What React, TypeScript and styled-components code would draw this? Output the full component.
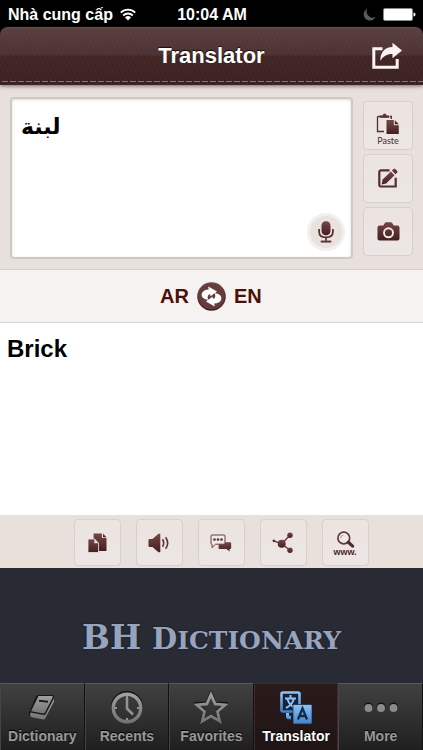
import React, { useState } from "react";
import styled, { createGlobalStyle, css } from "styled-components";

const Global = createGlobalStyle`
  *, *::before, *::after { box-sizing: border-box; }
  body { margin: 0; background: #282b34; font-family: "Liberation Sans", Arial, sans-serif; }
  button { font: inherit; color: inherit; border: 0; padding: 0; background: none; cursor: pointer; }
  svg { display: block; }
`;

const Screen = styled.div`
  min-height: 100vh;
  display: flex;
  flex-direction: column;
  background: #000;
`;

const StatusBar = styled.div`
  height: 27px;
  padding: 2px 7px 0 8px;
  display: grid;
  grid-template-columns: 1fr auto 1fr;
  align-items: center;
  color: #fff;
  font-size: 16px;
  font-weight: 700;
  line-height: 24px;
  white-space: nowrap;
`;

const StatusGroup = styled.div<{ $end?: boolean }>`
  display: flex;
  align-items: center;
  gap: 7px;
  justify-content: ${(p) => (p.$end ? "flex-end" : "flex-start")};
`;

const Header = styled.header`
  height: 58px;
  flex: none;
  display: flex;
  flex-direction: column;
  border-radius: 8px 8px 0 0;
  color: #fff;
  background:
    repeating-linear-gradient(65deg, rgba(255, 255, 255, 0.025) 0 1px, transparent 1px 4px),
    linear-gradient(#5a4040 0, #4c3232 28px, #422626 29px, #3b2121 100%);
  box-shadow: inset 0 1px 0 #6a5050, 0 1px 4px rgba(40, 20, 20, 0.6);
  position: relative;
  z-index: 1;
`;

const HeaderRow = styled.div`
  flex: 1;
  display: grid;
  grid-template-columns: 1fr auto 1fr;
  align-items: center;
  padding: 3px 20px 0;
`;

const Title = styled.h1`
  grid-column: 2;
  margin: 0;
  font-size: 22px;
  line-height: 28px;
  text-shadow: 0 -1px 1px #1c0c0c;
`;

const ShareButton = styled.button`
  justify-self: end;
`;

const Stitch = styled.div`
  height: 1px;
  margin-bottom: 3px;
  background: repeating-linear-gradient(90deg, transparent 0 2px, #857272 2px 8px);
`;

const InputPanel = styled.section`
  display: grid;
  grid-template-columns: 1fr 50px;
  gap: 10px;
  padding: 12px 10px 10px;
  background: #e8e0dc;
  border-bottom: 1px solid #d6d1ce;
`;

const InputBox = styled.div`
  position: relative;
  display: flex;
`;

const SourceText = styled.textarea`
  flex: 1;
  min-width: 0;
  resize: none;
  padding: 13px 9px;
  border: 2px solid #cfc8c5;
  border-radius: 4px;
  background: #fff;
  color: #000;
  font-family: "DejaVu Sans", sans-serif;
  font-size: 22px;
  font-weight: 700;
  line-height: 30px;
  box-shadow: inset 0 1px 3px rgba(0, 0, 0, 0.15);
  outline: none;
`;

const MicButton = styled.button`
  position: absolute;
  right: 8px;
  bottom: 8px;
  width: 38px;
  height: 38px;
  border-radius: 50%;
  background: #e9e2de;
  border: 3px solid #f3efec;
  display: grid;
  place-items: center;
`;

const tile = css`
  display: flex;
  flex-direction: column;
  align-items: center;
  justify-content: center;
  border: 1px solid #d9cfcb;
  border-radius: 4px;
  background: linear-gradient(#ebe4e1, #ece6e4);
`;

const SideTools = styled.div`
  display: flex;
  flex-direction: column;
  gap: 4px;
  padding: 4px 0 3px;
`;

const SideButton = styled.button<{ $labelled?: boolean }>`
  ${tile}
  height: 49px;
  padding-top: ${(p) => (p.$labelled ? "8px" : "0")};
`;

const SideLabel = styled.span`
  color: #4d2a2a;
  font-family: Lato, sans-serif;
  font-size: 9px;
  line-height: 12px;
`;

const LanguageBar = styled.section`
  height: 53px;
  flex: none;
  display: grid;
  grid-template-columns: 1fr 29px 1fr;
  gap: 8px;
  align-items: center;
  background: #f6f2f1;
  border-bottom: 1px solid #d8d4d3;
`;

const Language = styled.button<{ $side: "left" | "right" }>`
  justify-self: ${(p) => (p.$side === "left" ? "end" : "start")};
  color: #4b1008;
  font-size: 20px;
  font-weight: 700;
  line-height: 24px;
`;

const SwapButton = styled.button`
  border-radius: 50%;
`;

const Result = styled.main`
  flex: 1;
  padding: 12px 7px;
  background: #fff;
  color: #000;
  font-size: 24px;
  font-weight: 700;
  line-height: 28px;
`;

const ActionBar = styled.div`
  display: flex;
  justify-content: center;
  gap: 15px;
  padding: 4px 0 2px 19px;
  background: #e8e0db;
`;

const ActionButton = styled.button<{ $labelled?: boolean }>`
  ${tile}
  width: 47px;
  height: 47px;
  padding-top: ${(p) => (p.$labelled ? "3px" : "0")};
`;

const WebLabel = styled.span`
  color: #4d2a2a;
  font-size: 9px;
  font-weight: 700;
  line-height: 9px;
`;

const Banner = styled.div`
  height: 115px;
  flex: none;
  display: flex;
  align-items: baseline;
  justify-content: center;
  gap: 11px;
  background: #282b34;
  color: #98a3bd;
  font-family: "DejaVu Serif", serif;
  font-size: 33px;
  font-weight: 700;
  line-height: 140px;
  text-transform: uppercase;
  text-shadow: 0 0 2px #101827;
  white-space: nowrap;
`;

const BannerWord = styled.span`
  display: inline-block;
  font-size: 25px;
  &::first-letter { font-size: 29px; }
`;

const TabBar = styled.nav`
  height: 67px;
  flex: none;
  display: grid;
  grid-template-columns: repeat(5, 1fr);
  background: #1d1d1d;
`;

const Tab = styled.button<{ $active: boolean }>`
  display: flex;
  flex-direction: column;
  align-items: center;
  min-width: 0;
  padding-top: 5px;
  gap: 1px;
  border-top: 1px solid #59595b;
  border-left: 1px solid #454545;
  border-right: 1px solid #111;
  background: linear-gradient(#414141, #1f1f1f);
  color: #999;
  font-size: 14px;
  font-weight: 700;
  line-height: 18px;
  text-shadow: 0 -1px 1px #000;
  ${(p) =>
    p.$active &&
    css`
      color: #fff;
      border-color: #3b2b2b;
      background: linear-gradient(#2b1b1b, #201414);
    `}
`;

const TabIcon = styled.span`
  height: 37px;
  display: grid;
  place-items: center;
`;

const Defs = () => (
  <defs>
    <linearGradient id="maroon" x1="0" y1="0" x2="0" y2="1">
      <stop offset="0" stopColor="#764646" />
      <stop offset="1" stopColor="#431f20" />
    </linearGradient>
    <linearGradient id="gray" x1="0" y1="0" x2="0" y2="1">
      <stop offset="0" stopColor="#a0a0a0" />
      <stop offset="1" stopColor="#747474" />
    </linearGradient>
    <linearGradient id="blue" x1="0" y1="0" x2="0" y2="1">
      <stop offset="0" stopColor="#8fc3f5" />
      <stop offset="1" stopColor="#3f83cf" />
    </linearGradient>
  </defs>
);

type IconProps = { w: number; h: number; children: React.ReactNode };
const Icon = ({ w, h, children }: IconProps) => (
  <svg width={w} height={h} viewBox={`0 0 ${w} ${h}`} aria-hidden="true" fill="url(#maroon)">
    <Defs />
    {children}
  </svg>
);

const WifiIcon = () => (
  <Icon w={16} h={13}>
    <g fill="none" stroke="#fff" strokeWidth="1.8">
      <path d="M.8 4.6a10.3 10.3 0 0 1 14.4 0" />
      <path d="M3.2 7.5a6.8 6.8 0 0 1 9.6 0" />
    </g>
    <path d="M5 9.5a4.3 4.3 0 0 1 6 0L8 12.6z" fill="#fff" />
  </Icon>
);

const MoonIcon = () => (
  <Icon w={13} h={13}>
    <path d="M4.5.6A6.2 6.2 0 1 0 12.6 8.8 6 6 0 0 1 4.5.6z" fill="#5a5a5a" />
  </Icon>
);

const BatteryIcon = () => (
  <Icon w={33} h={13}>
    <rect x=".5" y=".5" width="29" height="12" rx="1.5" fill="#fff" stroke="#8b8b8b" />
    <path d="M30.5 4.5q2 0 2 2t-2 2z" fill="#fff" />
  </Icon>
);

const ShareIcon = () => (
  <Icon w={32} h={28}>
    <path d="M11.5 6.8H2.8v18.5h23.4V17" fill="none" stroke="#fbf3f2" strokeWidth="3" />
    <path d="M21.5.8 31 8.5l-9.5 7.8v-4.4C16 11.7 12.4 13.7 9.3 19 9.2 10.5 13.5 5.3 21.5 5z" fill="#fbf3f2" />
  </Icon>
);

const PasteIcon = () => (
  <Icon w={24} h={22}>
    <path d="M5 3.5H2.2a.7.7 0 0 0-.7.7v14.3h6.5M14 3.5h1.3v2.5" fill="none" stroke="#542d2e" strokeWidth="1.3" />
    <path d="M4 4.8V2.6h2.6C6.9 1.2 7.6.5 8.6.5s1.8.7 2 2.1h2.7v2.2z" />
    <path d="M10.5 7h7.3v5.3h5V21H10.5z" />
    <path d="m18.8 7 4 4.3h-4z" />
  </Icon>
);

const EditIcon = () => (
  <Icon w={22} h={21}>
    <path d="M12.5 2.3H4.2c-1.3 0-1.9.7-1.9 1.9v13c0 .8.5 1.3 1.4 1.3h15V9.7" fill="none" stroke="#542d2e" strokeWidth="2.2" />
    <path d="m5.6 11.6 8.3-8.1 3.6 3.7-8.3 8.2-4.6 1.2z" />
    <path d="m14.9 2.5 1.6-1.5q.9-.8 1.8 0l1.8 1.8q.9.9 0 1.8l-1.6 1.6z" />
  </Icon>
);

const CameraIcon = () => (
  <Icon w={23} h={19}>
    <path d="M2.5 3.5h3.8L8 .8q.3-.5 1-.5h5q.7 0 1 .5l1.7 2.7h3.8q2 0 2 2v11q0 2-2 2h-18q-2 0-2-2v-11q0-2 2-2z" />
    <circle cx="11.5" cy="10.8" r="4.5" fill="none" stroke="#f3eceb" strokeWidth="1.9" />
  </Icon>
);

const MicIcon = () => (
  <Icon w={16} h={22}>
    <rect x="3.5" y=".3" width="9" height="14" rx="4.3" />
    <path d="M1.1 8v2.7c0 3.4 2.7 5.6 6.9 5.6s6.9-2.2 6.9-5.6V8M8 16.3v4" fill="none" stroke="#542d2e" strokeWidth="1.7" />
    <rect x="2.5" y="19.5" width="11" height="2" rx="1" />
  </Icon>
);

const swapArrow =
  "M11.3 4.6 20 9.5 13.8 14.8 13 12.2C11 12.4 10 14.6 11.3 17.8 5.7 17.4 3.9 14.2 4.9 11.3 5.9 8.7 8.4 7.7 11.7 7.5z";

const SwapIcon = () => (
  <Icon w={29} h={29}>
    <circle cx="14.5" cy="14.5" r="14.3" />
    <circle cx="14.5" cy="14.5" r="12.8" fill="#643d3c" />
    <path d={swapArrow} fill="#fff" />
    <path d={swapArrow} fill="#fff" transform="rotate(180 14.5 14.5)" />
    <path d="m11.5 17 6-5" stroke="#633b3a" strokeWidth="1.1" />
  </Icon>
);

const CopyIcon = () => (
  <Icon w={19} h={20}>
    <path d="M5.6.5h8.3v4.6h4.6V18H5.6z" />
    <path d="m15 .5 3.5 3.7H15z" />
    <path d="M0 6h6.600l3.900 4v9.500H0z" stroke="#ece5e2" strokeWidth=".8" />
    <path d="M6.400 6v4.300h4.100z" fill="#eee7e5" />
  </Icon>
);

const SpeakerIcon = () => (
  <Icon w={22} h={20}>
    <path d="M.5 7Q.5 6 1.5 6h3L10.5.7h1.8v18.600h-1.800L4.500 14h-3q-1 0-1-1z" />
    <path d="M14.500 6.300q2.400 3.700 0 7.400M17.600 4.200q4.200 5.800 0 11.600" fill="none" stroke="#5b3434" strokeWidth="1.6" />
  </Icon>
);

const ChatIcon = () => (
  <Icon w={22} h={18}>
    <path d="M9 8.300h10.700q1.500 0 1.500 1.300v4.500q0 1-1.500 1h-.2l.2 2.400-3.300-2.400H10q-1.500 0-1.500-1z" />
    <path d="M2 1h12q1 0 1 1v7.200q0 1-1 1H5.600L2 13.600v-3.400q-1 0-1-1V2q0-1 1-1z" fill="#efe8e6" stroke="#62403f" />
    <circle cx="4.5" cy="5.5" r="1.3" />
    <circle cx="8" cy="5.5" r="1.3" />
    <circle cx="11.5" cy="5.5" r="1.3" />
  </Icon>
);

const NodesIcon = () => (
  <Icon w={22} h={22}>
    <path d="m1.700 8.800 8 3 8.300-8.500M9.700 11.800l8.300 6.500" fill="none" stroke="#5b3434" strokeWidth="1.3" />
    <circle cx="1.9" cy="8.8" r="1.4" />
    <circle cx="9.7" cy="11.8" r="4" />
    <circle cx="18" cy="3.3" r="2.7" />
    <circle cx="18" cy="18.3" r="2.7" />
  </Icon>
);

const SearchIcon = () => (
  <Icon w={19} h={17}>
    <circle cx="7.8" cy="7" r="5.9" fill="#f0e9e7" stroke="#603a3a" strokeWidth="1.7" />
    <path d="M4.500 7.200q.3-2.600 2.800-3" fill="none" stroke="#a48b8a" />
    <path d="m12.300 11.300 4.300 3.800" stroke="#522b2c" strokeWidth="3.2" strokeLinecap="round" />
  </Icon>
);

const BookIcon = () => (
  <Icon w={30} h={32}>
    <path d="M11 3h13.500q1.700-.3 2.300 1v4L17.500 26q-.8 1.200-2 1.200L4 25q-3-1.300-2-4.600L9 4.500Q9.500 3 11 3z" fill="#161616" />
    <path d="M11.500 4h13.300q1.300 0 .8 1.400L18 20.600q-.6 1-1.800.8L4 19.300z" fill="url(#gray)" />
    <path d="M3.500 20.400q-1.200 3.900 1.300 4.900l11.500 2.300q1.200.1 1.800-.9l8.900-17.200V6.200l-8.300 15.800q-.7 1.200-2 1z" fill="url(#gray)" />
    <path d="m12 8.800 9 .9" stroke="#1f1f1f" strokeWidth="2" />
  </Icon>
);

const ClockIcon = () => (
  <Icon w={34} h={34}>
    <circle cx="17" cy="16" r="15" fill="none" stroke="#101010" strokeWidth="2" />
    <circle cx="17" cy="17" r="13.8" fill="none" stroke="url(#gray)" strokeWidth="3.5" />
    <path d="M17 7v10.500l6 6" fill="none" stroke="#929292" strokeWidth="2.6" strokeLinejoin="round" />
    <path d="M5 17h2M27 17h2M17 27v2M17 5v2" stroke="#929292" strokeWidth="2" />
  </Icon>
);

const StarIcon = () => (
  <Icon w={34} h={33}>
    <path d="m17 2 4.100 9.900 10.600.8-8.100 6.900 2.500 10.400-9.100-5.600L7.900 30l2.500-10.400-8.100-6.900 10.600-.8z" fill="none" stroke="#111" strokeWidth="3" />
    <path d="m17 3.500 4.100 9.400 10 .9-7.600 6.600 2.300 9.800-8.800-5.200-8.800 5.200 2.300-9.800-7.600-6.600 10-.9z" fill="none" stroke="url(#gray)" strokeWidth="2.8" />
  </Icon>
);

const TranslateIcon = () => (
  <Icon w={33} h={34}>
    <rect x="1.5" y="1.5" width="18" height="19" rx="1.5" fill="#152238" stroke="url(#blue)" strokeWidth="2.6" />
    <path d="M10.500 4v3M5 7.500h11M7.500 8.500q2 5.500 7.500 8.500M13.700 8.500q-2 5.500-7.700 8.500" fill="none" stroke="#8fc3f5" strokeWidth="2" />
    <path d="M6 22v4q0 2.500 5 2.500v-3.700H9V22z" fill="url(#blue)" />
    <path d="M13 13.500h18q1 0 1 1V32q0 1-1 1H14q-1 0-1-1z" fill="url(#blue)" stroke="#17243a" strokeWidth=".7" />
    <path d="m18 28.500 4.500-11.200 4.500 11.200M19.500 25h6" fill="none" stroke="#142a49" strokeWidth="2.3" />
  </Icon>
);

const MoreIcon = () => (
  <Icon w={34} h={12}>
    {[4.5, 17, 29.5].map((x) => (
      <g key={x}>
        <circle cx={x} cy="5" r="4.5" fill="#111" />
        <circle cx={x} cy="6" r="4" fill="#8b8b8b" />
      </g>
    ))}
  </Icon>
);

const tabs = [
  { name: "Dictionary", icon: <BookIcon /> },
  { name: "Recents", icon: <ClockIcon /> },
  { name: "Favorites", icon: <StarIcon /> },
  { name: "Translator", icon: <TranslateIcon /> },
  { name: "More", icon: <MoreIcon /> },
];

export default function App() {
  const [text, setText] = useState("لبنة");
  const [active, setActive] = useState("Translator");
  return (
    <Screen>
      <Global />
      <StatusBar>
        <StatusGroup>
          <span>Nhà cung cấp</span>
          <WifiIcon />
        </StatusGroup>
        <span>10:04 AM</span>
        <StatusGroup $end>
          <MoonIcon />
          <BatteryIcon />
        </StatusGroup>
      </StatusBar>
      <Header>
        <HeaderRow>
          <Title>Translator</Title>
          <ShareButton aria-label="Share"><ShareIcon /></ShareButton>
        </HeaderRow>
        <Stitch />
      </Header>
      <InputPanel>
        <InputBox>
          <SourceText aria-label="Source text" spellCheck={false} value={text} onChange={(e) => setText(e.target.value)} />
          <MicButton aria-label="Speak"><MicIcon /></MicButton>
        </InputBox>
        <SideTools>
          <SideButton $labelled>
            <PasteIcon />
            <SideLabel>Paste</SideLabel>
          </SideButton>
          <SideButton aria-label="Edit"><EditIcon /></SideButton>
          <SideButton aria-label="Camera"><CameraIcon /></SideButton>
        </SideTools>
      </InputPanel>
      <LanguageBar>
        <Language $side="left">AR</Language>
        <SwapButton aria-label="Swap languages"><SwapIcon /></SwapButton>
        <Language $side="right">EN</Language>
      </LanguageBar>
      <Result>Brick</Result>
      <ActionBar>
        <ActionButton aria-label="Copy"><CopyIcon /></ActionButton>
        <ActionButton aria-label="Listen"><SpeakerIcon /></ActionButton>
        <ActionButton aria-label="Message"><ChatIcon /></ActionButton>
        <ActionButton aria-label="Share translation"><NodesIcon /></ActionButton>
        <ActionButton $labelled>
          <SearchIcon />
          <WebLabel>www.</WebLabel>
        </ActionButton>
      </ActionBar>
      <Banner>
        <span>BH</span>
        <BannerWord>Dictionary</BannerWord>
      </Banner>
      <TabBar>
        {tabs.map((t) => (
          <Tab key={t.name} $active={t.name === active} onClick={() => setActive(t.name)}>
            <TabIcon>{t.icon}</TabIcon>
            {t.name}
          </Tab>
        ))}
      </TabBar>
    </Screen>
  );
}
